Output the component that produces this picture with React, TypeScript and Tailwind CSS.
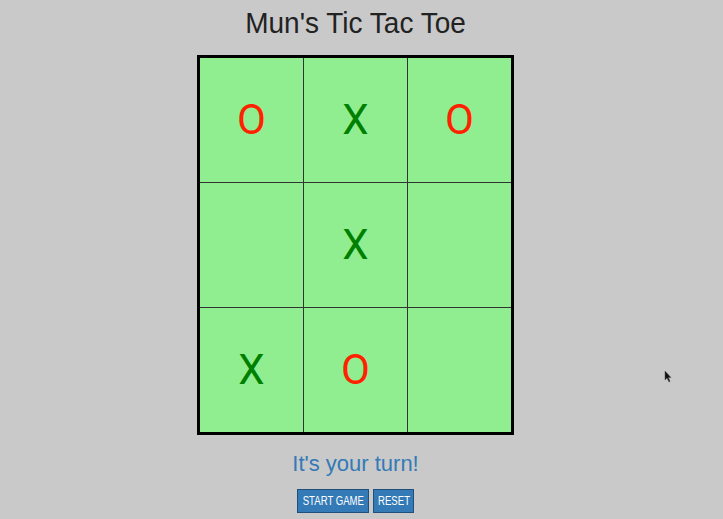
const board = ['O', 'X', 'O', '', 'X', '', 'X', 'O', ''];

const Cell = ({ value }: { value: string }) => (
  <div
    className={`flex items-center justify-center bg-[#90ee90] text-[42px] leading-none font-['Roboto',sans-serif] ${
      value === 'X' ? 'text-[#008000]' : 'text-[#ff2200]'
    }`}
  >
    {value}
  </div>
);

const Btn = ({ label, width }: { label: string; width: string }) => (
  <button
    className={`${width} h-[24px] flex items-center justify-center bg-[#337ab7] border border-[#1f4f7a] text-white text-[12px]`}
  >
    <span className="inline-block whitespace-nowrap scale-x-[0.8]">{label}</span>
  </button>
);

export default function App() {
  return (
    <main className="relative min-h-[519px] bg-[#c9c9c9] font-['Liberation_Sans',Arial,sans-serif]">
      <div className="w-[711px] flex flex-col items-center pt-[7px]">
        <h1 className="text-[28px] leading-[34px] text-[#222] scale-y-[1.05]">Mun's Tic Tac Toe</h1>

        <div className="mt-[14px] border-[3px] border-black bg-[#333]">
          <div className="grid grid-cols-[103px_103px_103px] grid-rows-[124px_124px_124px] gap-px">
            {board.map((v, i) => (
              <Cell key={i} value={v} />
            ))}
          </div>
        </div>

        <p className="mt-[16px] text-[22px] leading-[26px] text-[#337ab7]">It's your turn!</p>

        <div className="mt-[12px] flex gap-[4px]">
          <Btn label="START GAME" width="w-[72px]" />
          <Btn label="RESET" width="w-[41px]" />
        </div>
      </div>

      <svg className="absolute left-[664px] top-[370px]" width="8" height="13" viewBox="0 0 8 13">
        <path d="M1 1 L1 10 L3 8 L5 12 L6 11.5 L4.5 7.5 L7 7.5 Z" fill="#111" stroke="#555" strokeWidth="0.5" />
      </svg>
    </main>
  );
}
